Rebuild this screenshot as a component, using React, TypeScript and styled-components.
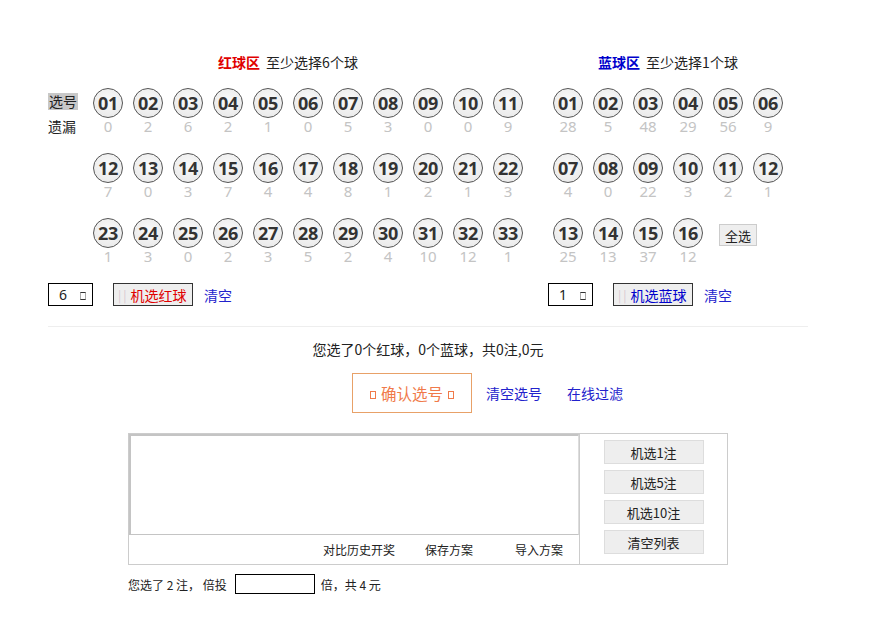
import styled, { createGlobalStyle } from "styled-components";

const GlobalStyle = createGlobalStyle`
  body {
    margin: 0;
    background: #fff;
    font-family: "Noto Sans CJK SC", "Noto Sans", sans-serif;
    color: #222;
  }
`;

const Page = styled.div`
  width: 760px;
  padding: 52px 0 0 48px;
`;

const Zones = styled.div`
  display: flex;
`;

const Zone = styled.div<{ $width: number }>`
  width: ${(p) => p.$width}px;
`;

const ZoneTitle = styled.div<{ $width: number }>`
  width: ${(p) => p.$width}px;
  text-align: center;
  font-size: 14px;
  line-height: 20px;
  margin-bottom: 16px;
`;

const TitleMark = styled.span<{ $color: string }>`
  color: ${(p) => p.$color};
  font-weight: bold;
  margin-right: 6px;
`;

const BallArea = styled.div`
  display: flex;
`;

const LabelCol = styled.div`
  width: 45px;
  display: flex;
  flex-direction: column;
  align-items: flex-start;
  font-size: 14px;
  line-height: 16px;
`;

const PickLabel = styled.span`
  background: #c8c8c8;
  line-height: 17px;
  padding: 0 1px;
  margin-top: 5px;
`;

const MissLabel = styled.span`
  line-height: 16px;
  margin-top: 8px;
`;

const BallGrid = styled.div<{ $cols: number }>`
  display: grid;
  grid-template-columns: repeat(${(p) => p.$cols}, 40px);
  row-gap: 19px;
`;

const Cell = styled.div`
  width: 30px;
  display: flex;
  flex-direction: column;
  align-items: center;
`;

const Ball = styled.div`
  width: 28px;
  height: 28px;
  border: 1px solid #555;
  border-radius: 50%;
  background: radial-gradient(circle at 50% 40%, #fafafa 0%, #ececec 70%, #e2e2e2 100%);
  display: flex;
  align-items: center;
  justify-content: center;
  font-family: "Noto Sans", "Open Sans", sans-serif;
  font-weight: bold;
  font-size: 18px;
  color: #333;
  letter-spacing: -0.2px;
`;

const Miss = styled.div`
  font-family: "Noto Sans", "Open Sans", sans-serif;
  font-size: 15px;
  line-height: 16px;
  color: #c4c4c4;
`;

const AllButton = styled.button`
  align-self: start;
  margin: 6px 0 0 6px;
  width: 38px;
  height: 22px;
  padding: 0;
  background: #eee;
  border: 1px solid #ccc;
  font-family: "Noto Sans CJK SC", sans-serif;
  font-size: 13px;
  color: #222;
`;

const Controls = styled.div`
  display: flex;
  margin-top: 19px;
`;

const ControlGroup = styled.div<{ $width: number }>`
  width: ${(p) => p.$width}px;
  display: flex;
  align-items: center;
`;

const CountBox = styled.div`
  box-sizing: border-box;
  width: 45px;
  height: 23px;
  border: 1px solid #000;
  display: flex;
  align-items: center;
  gap: 13px;
  padding-left: 10px;
  font-family: "Noto Sans", sans-serif;
  font-size: 14px;
`;

const Tofu = styled.span<{ $color?: string }>`
  display: inline-block;
  width: 4px;
  height: 6px;
  border: 1px solid ${(p) => p.$color || "#333"};
  border-left-color: ${(p) => (p.$color ? p.$color : "#aaa")};
  border-right-color: ${(p) => (p.$color ? p.$color : "#aaa")};
  margin-top: 3px;
`;

const PickButton = styled.button<{ $color: string }>`
  margin-left: 20px;
  width: 80px;
  height: 23px;
  padding: 0 0 0 4px;
  background: #eee;
  border: 1px solid #333;
  display: flex;
  align-items: center;
  font-family: "Noto Sans CJK SC", sans-serif;
  font-size: 14px;
  color: ${(p) => p.$color};
`;

const Pipes = styled.span`
  color: #d8c8d0;
  font-size: 12px;
  letter-spacing: 2px;
  margin-right: 2px;
`;

const Link = styled.a<{ $size?: number }>`
  color: #2222cc;
  font-size: ${(p) => p.$size || 14}px;
  text-decoration: none;
  cursor: pointer;
`;

const ClearLink = styled(Link)`
  margin-left: 11px;
`;

const Divider = styled.div`
  height: 1px;
  background: #eee;
  margin-top: 20px;
`;

const Summary = styled.div`
  text-align: center;
  font-size: 14px;
  line-height: 20px;
  margin-top: 12px;
`;

const ConfirmRow = styled.div`
  display: flex;
  align-items: center;
  margin: 14px 0 0 304px;
`;

const ConfirmButton = styled.button`
  width: 120px;
  height: 40px;
  background: #fff;
  border: 1px solid #e8a168;
  color: #f07a4a;
  font-family: "Noto Sans CJK SC", sans-serif;
  font-size: 15.5px;
  display: flex;
  align-items: center;
  justify-content: center;
  gap: 5px;
  padding: 0;
`;

const RowLink = styled(Link)<{ $gap: number }>`
  margin-left: ${(p) => p.$gap}px;
`;

const Board = styled.div`
  display: flex;
  width: 598px;
  height: 130px;
  margin: 20px 0 0 80px;
  border: 1px solid #ccc;
`;

const ListPane = styled.div`
  width: 450px;
  display: flex;
  flex-direction: column;
`;

const ListArea = styled.div`
  height: 98px;
  border: 1px solid #c4c4c4;
  border-top-width: 2px;
  border-left-width: 2px;
  border-right-color: #ddd;
`;

const ListBar = styled.div`
  flex: 1;
  display: flex;
  align-items: center;
  justify-content: flex-end;
  padding: 0 16px 0 0;
  font-size: 12px;
  color: #222;
`;

const BarItem = styled.span<{ $gap: number }>`
  margin-right: ${(p) => p.$gap}px;
`;

const SidePane = styled.div`
  flex: 1;
  border-left: 1px solid #ccc;
  display: flex;
  flex-direction: column;
  align-items: center;
  gap: 6px;
  padding-top: 6px;
`;

const SideButton = styled.button`
  width: 100px;
  height: 24px;
  padding: 0;
  background: #eee;
  border: 1px solid #ddd;
  font-family: "Noto Sans CJK SC", sans-serif;
  font-size: 13px;
  color: #222;
`;

const Footer = styled.div`
  display: flex;
  align-items: center;
  margin: 9px 0 0 80px;
  font-size: 12px;
  color: #222;
  white-space: pre;
`;

const TimesInput = styled.input`
  width: 80px;
  height: 20px;
  box-sizing: border-box;
  border: 1px solid #000;
  margin: 0 6px 0 8px;
  padding: 0;
`;

const redMiss = [
  [0, 2, 6, 2, 1, 0, 5, 3, 0, 0, 9],
  [7, 0, 3, 7, 4, 4, 8, 1, 2, 1, 3],
  [1, 3, 0, 2, 3, 5, 2, 4, 10, 12, 1],
];
const blueMiss = [
  [28, 5, 48, 29, 56, 9],
  [4, 0, 22, 3, 2, 1],
  [25, 13, 37, 12],
];

const pad = (n: number) => (n < 10 ? "0" + n : "" + n);

function Balls({ rows }: { rows: number[][] }) {
  return (
    <>
      {rows.flat().map((miss, i) => (
        <Cell key={i}>
          <Ball>{pad(i + 1)}</Ball>
          <Miss>{miss}</Miss>
        </Cell>
      ))}
    </>
  );
}

export default function App() {
  return (
    <>
      <GlobalStyle />
      <Page>
        <Zones>
          <Zone $width={505}>
            <ZoneTitle $width={480}>
              <TitleMark $color="#e00000">红球区</TitleMark>至少选择6个球
            </ZoneTitle>
            <BallArea>
              <LabelCol>
                <PickLabel>选号</PickLabel>
                <MissLabel>遗漏</MissLabel>
              </LabelCol>
              <BallGrid $cols={11}>
                <Balls rows={redMiss} />
              </BallGrid>
            </BallArea>
          </Zone>
          <Zone $width={255}>
            <ZoneTitle $width={230}>
              <TitleMark $color="#0000cc">蓝球区</TitleMark>至少选择1个球
            </ZoneTitle>
            <BallGrid $cols={6}>
              <Balls rows={blueMiss} />
              <AllButton>全选</AllButton>
            </BallGrid>
          </Zone>
        </Zones>

        <Controls>
          <ControlGroup $width={500}>
            <CountBox>
              6<Tofu />
            </CountBox>
            <PickButton $color="#e00000">
              <Pipes>||</Pipes>机选红球
            </PickButton>
            <ClearLink>清空</ClearLink>
          </ControlGroup>
          <ControlGroup $width={260}>
            <CountBox>
              1<Tofu />
            </CountBox>
            <PickButton $color="#0000cc">
              <Pipes>||</Pipes>机选蓝球
            </PickButton>
            <ClearLink>清空</ClearLink>
          </ControlGroup>
        </Controls>

        <Divider />

        <Summary>您选了0个红球，0个蓝球，共0注,0元</Summary>

        <ConfirmRow>
          <ConfirmButton>
            <Tofu $color="#f07a4a" />
            确认选号
            <Tofu $color="#f07a4a" />
          </ConfirmButton>
          <RowLink $gap={14}>清空选号</RowLink>
          <RowLink $gap={25}>在线过滤</RowLink>
        </ConfirmRow>

        <Board>
          <ListPane>
            <ListArea />
            <ListBar>
              <BarItem $gap={30}>对比历史开奖</BarItem>
              <BarItem $gap={42}>保存方案</BarItem>
              <BarItem $gap={0}>导入方案</BarItem>
            </ListBar>
          </ListPane>
          <SidePane>
            <SideButton>机选1注</SideButton>
            <SideButton>机选5注</SideButton>
            <SideButton>机选10注</SideButton>
            <SideButton>清空列表</SideButton>
          </SidePane>
        </Board>

        <Footer>
          您选了 2 注， 倍投
          <TimesInput />
          倍，共 4 元
        </Footer>
      </Page>
    </>
  );
}
